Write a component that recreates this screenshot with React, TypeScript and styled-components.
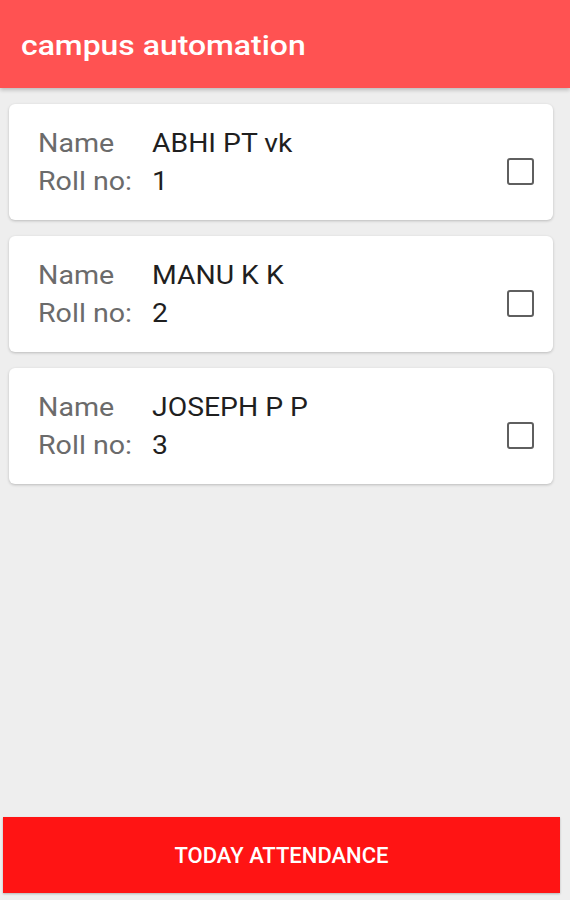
import React from 'react'
import styled, { createGlobalStyle } from 'styled-components'

const students = [
  { name: 'ABHI PT vk', roll: 1 },
  { name: 'MANU K K', roll: 2 },
  { name: 'JOSEPH P P', roll: 3 },
]

export default function App() {
  return (
    <>
      <GlobalStyle />
      <Screen>
        <Header>
          <Title>campus automation</Title>
        </Header>
        <List>
          {students.map((s) => (
            <Card key={s.roll}>
              <Info>
                <Label>Name</Label>
                <Value>{s.name}</Value>
                <Label>Roll no:</Label>
                <Value>{s.roll}</Value>
              </Info>
              <Check type="checkbox" />
            </Card>
          ))}
        </List>
        <Footer>
          <SubmitButton>TODAY ATTENDANCE</SubmitButton>
        </Footer>
      </Screen>
    </>
  )
}

const GlobalStyle = createGlobalStyle`
  html, body {
    margin: 0;
    padding: 0;
    background: #eeeeee;
    font-family: Roboto, "Liberation Sans", sans-serif;
  }
`

const Screen = styled.div`
  display: flex;
  flex-direction: column;
  width: 570px;
  height: 900px;
  background: #eeeeee;
  overflow: hidden;
`

const Header = styled.header`
  display: flex;
  align-items: center;
  height: 88px;
  padding: 0 21px;
  background: #ff5252;
  box-shadow: 0 2px 4px rgba(0, 0, 0, 0.22);
  position: relative;
  z-index: 1;
`

const Title = styled.h1`
  margin: 2px 0 0;
  color: #fff;
  font-size: 28px;
  font-weight: 500;
  transform: scaleX(1.14);
  transform-origin: left center;
`

const List = styled.div`
  flex: 1;
  display: flex;
  flex-direction: column;
  gap: 16px;
  padding: 16px 17px 0 9px;
`

const Card = styled.div`
  display: flex;
  align-items: center;
  justify-content: space-between;
  height: 116px;
  padding: 0 19px 0 29px;
  background: #fff;
  border-radius: 6px;
  box-shadow: 0 1px 3px rgba(0, 0, 0, 0.22);
  box-sizing: border-box;
`

const Info = styled.div`
  display: grid;
  grid-template-columns: 114px auto;
  row-gap: 8px;
  font-size: 26px;
  line-height: 30px;
  margin-top: 0;
`

const Label = styled.span`
  color: #6b6b6b;
  transform: scaleX(1.1);
  transform-origin: left center;
`

const Value = styled.span`
  color: #1f1f1f;
  transform: scaleX(1.09);
  transform-origin: left center;
`

const Check = styled.input`
  appearance: none;
  width: 27px;
  height: 27px;
  margin: 19px 0 0;
  border: 2.5px solid #5f5f5f;
  border-radius: 3px;
  box-sizing: border-box;
  background: #fff;
`

const Footer = styled.div`
  padding: 0 10px 7px 3px;
`

const SubmitButton = styled.button`
  display: block;
  width: 100%;
  height: 76px;
  border: none;
  border-radius: 0;
  background: #ff1414;
  color: #fff;
  font-family: Roboto, "Liberation Sans", sans-serif;
  font-size: 22px;
  font-weight: 500;
  box-shadow: 0 1px 2px rgba(0, 0, 0, 0.25);
`
